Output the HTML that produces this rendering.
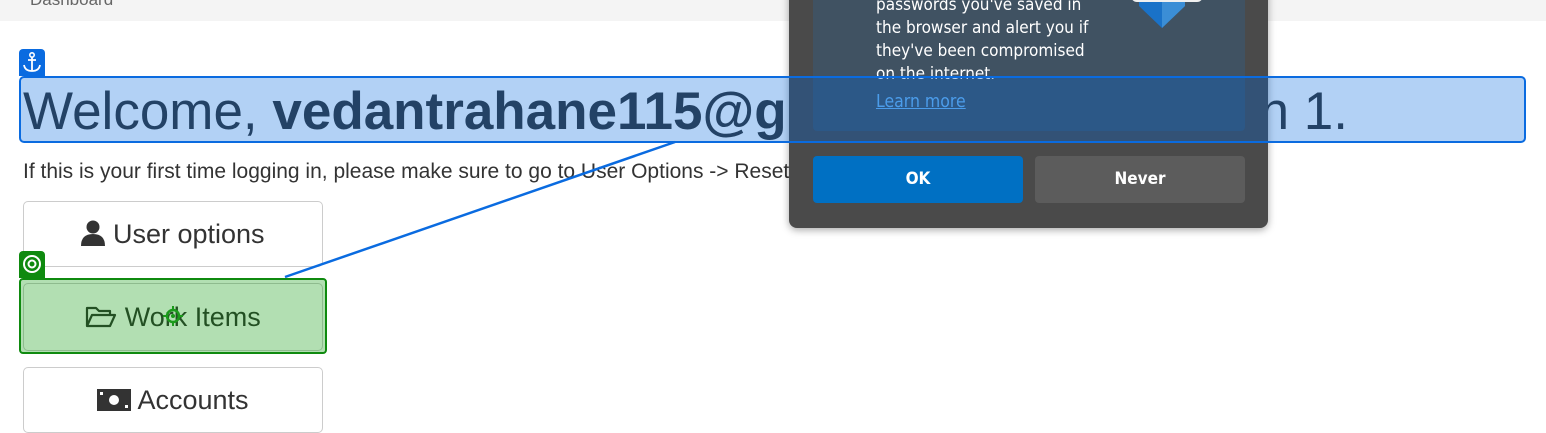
<!DOCTYPE html>
<html><head><style>
body{margin:0;width:1546px;height:411px;overflow:hidden;background:#fff;font-family:"Liberation Sans",sans-serif;position:relative;color:#333}
.a{position:absolute}
.btn{position:absolute;left:23px;width:298px;height:64px;border:1px solid #ccc;border-radius:5px;background:#fff;font-size:27px;text-align:center;line-height:64px;color:#333}
.dlg{font-family:"DejaVu Sans Condensed","Liberation Sans",sans-serif;}
</style></head><body>
<div class="a" style="left:0;top:0;width:1546px;height:21px;background:#f4f4f4"></div>
<div class="a" style="left:30px;top:-10px;font-size:17px;color:#666">Dashboard</div>

<div class="a" style="left:23px;top:80px;font-size:53px;line-height:64px;white-space:nowrap;color:#333">Welcome, <b>vedantrahane115@gmail.com</b></div>
<div class="a" style="left:900px;width:448px;top:80px;font-size:53px;line-height:64px;white-space:nowrap;color:#333;text-align:right">admin 1.</div>
<div class="a" style="left:23px;top:160px;font-size:21px;white-space:nowrap">If this is your first time logging in, please make sure to go to User Options -&gt; Reset Password.</div>

<div class="btn" style="top:201px"><svg width="24" height="26" viewBox="0 0 24 26" style="vertical-align:-3px"><circle cx="12" cy="7" r="6.5" fill="#333"/><path d="M0 26 Q0 14 12 14 Q24 14 24 26Z" fill="#333"/></svg> User options</div>
<div class="btn" style="top:283px;height:66px;line-height:66px"><svg width="32" height="24" viewBox="0 0 32 24" style="vertical-align:-3px"><path d="M2 21V3h9l3 3h11v4M2 21l5-11h23l-5 11z" fill="none" stroke="#333" stroke-width="2.2" stroke-linejoin="round"/></svg> Work Items</div>
<div class="btn" style="top:367px"><svg width="34" height="22" viewBox="0 0 34 22" style="vertical-align:-2px"><rect width="34" height="22" fill="#333"/><circle cx="17" cy="11" r="5" fill="#fff"/><rect x="3" y="3" width="3" height="3" fill="#fff"/><rect x="28" y="16" width="3" height="3" fill="#fff"/></svg> Accounts</div>

<div class="a" style="left:19px;top:278px;width:304px;height:72px;border:2px solid #0f8a0f;border-radius:4px;background:rgba(0,150,0,0.3)"></div>
<div class="a" style="left:19px;top:251px;width:26px;height:27px;background:#0f8a0f;border-radius:4px 4px 0 0"><svg width="26" height="27"><circle cx="13" cy="13" r="8" fill="none" stroke="#fff" stroke-width="2"/><circle cx="13" cy="13" r="3.5" fill="none" stroke="#fff" stroke-width="2"/></svg></div>
<svg class="a" style="left:162px;top:305px" width="22" height="22"><circle cx="11" cy="11" r="6" fill="none" stroke="#1a9a1a" stroke-width="2.5"/><circle cx="11" cy="11" r="2" fill="#1a9a1a"/><path d="M11 1v4M11 17v4M1 11h4M17 11h4" stroke="#1a9a1a" stroke-width="2"/></svg>

<div class="a dlg" style="left:789px;top:-20px;width:479px;height:248px;background:#4a4a4a;border-radius:8px;box-shadow:0 2px 8px rgba(0,0,0,.35)">
 <div class="a" style="left:24px;top:0;width:432px;height:151px;background:#405262;border-radius:0 0 4px 4px"></div>
 <div class="a" style="left:87px;top:14px;color:#fff;font-size:17px;line-height:23px;width:250px">passwords you've saved in<br>the browser and alert you if<br>they've been compromised<br>on the internet.</div>
 <div class="a" style="left:87px;top:112px;color:#6cb4f0;font-size:17.5px;text-decoration:underline">Learn more</div>
 <svg class="a" style="left:338px;top:0" width="80" height="50"><path d="M12 12h46v14L35 48 12 26z" fill="#1a72c8"/><path d="M35 12h23v14L35 48z" fill="#3b8ed6"/><rect x="4" y="8" width="72" height="14" rx="6" fill="#f0f0f0"/></svg>
 <div class="a" style="left:24px;top:176px;width:210px;height:47px;background:#0070c3;border-radius:4px;color:#fff;font-weight:bold;font-size:17px;text-align:center;line-height:47px">OK</div>
 <div class="a" style="left:246px;top:176px;width:210px;height:47px;background:#5c5c5c;border-radius:4px;color:#fff;font-weight:bold;font-size:17px;text-align:center;line-height:47px">Never</div>
</div>

<div class="a" style="left:19px;top:76px;width:1503px;height:63px;border:2px solid #0a6be0;border-radius:5px;background:rgba(0,102,222,0.3)"></div>
<div class="a" style="left:19px;top:49px;width:26px;height:27px;background:#0a6be0;border-radius:4px 4px 0 0"><svg width="26" height="27" viewBox="0 0 26 27"><circle cx="13" cy="6" r="2.2" fill="none" stroke="#fff" stroke-width="1.6"/><path d="M13 8v14M9 11h8M5 16q1 6 8 6q7 0 8-6" fill="none" stroke="#fff" stroke-width="1.8"/></svg></div>
<svg class="a" style="left:0;top:0" width="1546" height="411"><line x1="285" y1="277" x2="675" y2="142" stroke="#0a6be0" stroke-width="2.5"/></svg>
</body></html>
